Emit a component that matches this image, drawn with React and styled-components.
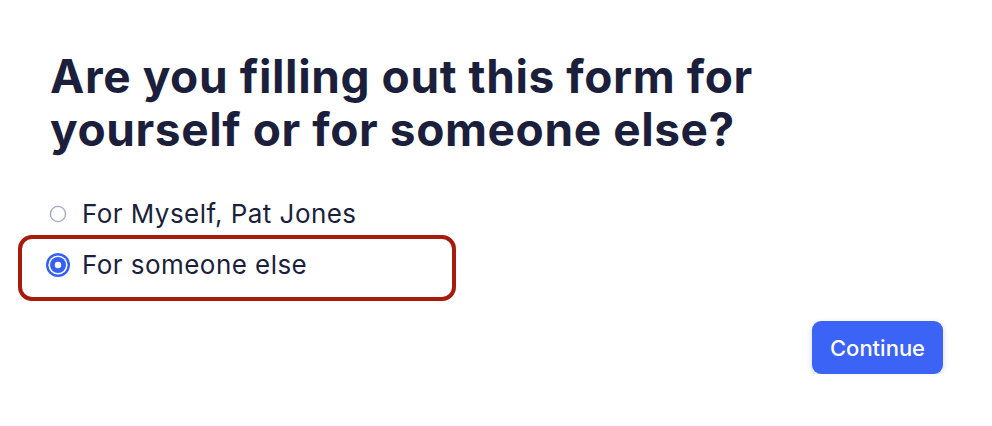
import React, { useState } from "react";
import styled, { createGlobalStyle } from "styled-components";

const GlobalStyle = createGlobalStyle`
  html, body {
    margin: 0;
    padding: 0;
    background: #ffffff;
  }
  body {
    font-family: Inter, "Noto Sans", sans-serif;
    color: #1b1f3b;
  }
`;

const options = [
	{ id: "self", label: "For Myself, Pat Jones" },
	{ id: "other", label: "For someone else" },
];

export default function App() {
	const [choice, setChoice] = useState("other");

	return (
		<>
			<GlobalStyle />
			<Page>
				<Title>
					Are you filling out this form for
					<br />
					yourself or for someone else?
				</Title>
				<OptionList>
					{options.map((o) => (
						<Option
							key={o.id}
							$highlight={choice === o.id}
							onClick={() => setChoice(o.id)}
						>
							<RadioIcon checked={choice === o.id} />
							<OptionLabel>{o.label}</OptionLabel>
						</Option>
					))}
				</OptionList>
				<Footer>
					<ContinueButton>Continue</ContinueButton>
				</Footer>
			</Page>
		</>
	);
}

function RadioIcon({ checked }) {
	if (!checked) {
		return (
			<RadioBox>
				<svg width="24" height="24" viewBox="0 0 24 24">
					<circle cx="12" cy="12" r="7.6" fill="#fff" stroke="#a3a8c9" strokeWidth="1.4" />
				</svg>
			</RadioBox>
		);
	}
	return (
		<RadioBox>
			<svg width="24" height="24" viewBox="0 0 24 24">
				<circle cx="12" cy="12" r="12" fill="#3560f5" />
				<circle cx="12" cy="12" r="9.6" fill="#fff" />
				<circle cx="12" cy="12" r="8" fill="#3560f5" />
				<circle cx="12" cy="12" r="3.2" fill="#fff" />
			</svg>
		</RadioBox>
	);
}

const Page = styled.div`
  padding: 50px 49px 0 50px;
`;

const Title = styled.h1`
  margin: 0;
  font-size: 46px;
  line-height: 53px;
  font-weight: 700;
  letter-spacing: 0.6px;
  color: #1b1f3b;
`;

const OptionList = styled.div`
  display: flex;
  flex-direction: column;
  margin-top: 32px;
  margin-left: -4px;
`;

const Option = styled.div`
  position: relative;
  display: flex;
  align-items: center;
  gap: 12px;
  height: 51px;
  cursor: pointer;

  &::before {
    content: "";
    display: ${(p) => (p.$highlight ? "block" : "none")};
    position: absolute;
    top: -4px;
    bottom: -11px;
    left: -28px;
    width: 438px;
    box-sizing: border-box;
    border: 4.5px solid #a61b0c;
    border-radius: 14px;
    pointer-events: none;
  }
`;

const RadioBox = styled.span`
  display: inline-flex;
  width: 24px;
  height: 24px;
`;

const OptionLabel = styled.span`
  font-size: 26px;
  letter-spacing: 0.45px;
  color: #1b1f3b;
`;

const Footer = styled.div`
  display: flex;
  justify-content: flex-end;
  margin-top: 31px;
`;

const ContinueButton = styled.button`
  width: 131px;
  height: 53px;
  border: 0;
  border-radius: 9px;
  background: #3b63f5;
  color: #ffffff;
  font-family: Inter, sans-serif;
  font-size: 22px;
  font-weight: 500;
  box-shadow: 0 2px 6px rgba(30, 50, 120, 0.18);
  cursor: pointer;
`;
